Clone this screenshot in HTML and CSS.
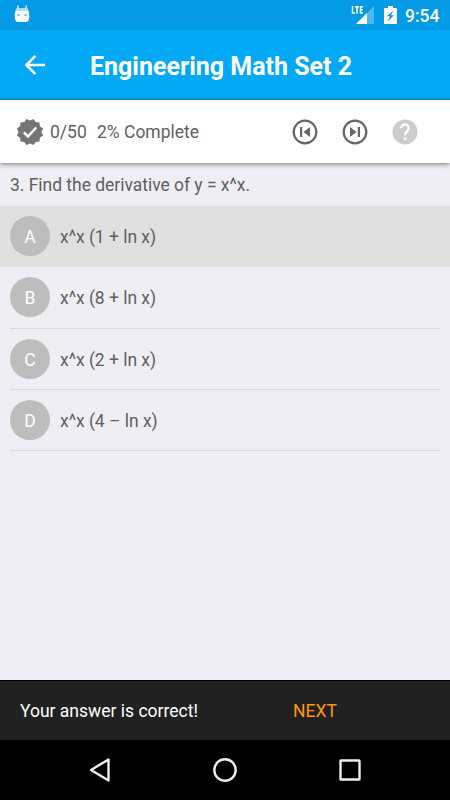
FILE: index.html
```
<!DOCTYPE html>
<html lang="en">
  <head>
    <meta charset="UTF-8" />
    <meta name="viewport" content="width=device-width, initial-scale=1.0" />
    <title>Engineering Math Set 2</title>
    <link rel="stylesheet" href="styles.css">
  </head>
  <body>
    <div class="status">
      <svg class="droid" width="16" height="18" viewBox="0 0 16 18">
        <path d="M3.500 .5l1 4M12.500 .5l-1 4" stroke="#fff" stroke-width="1.2" />
        <path d="M2.500 3.500h11Q16.500 9.500 14.700 15 14.200 17 12 17H4Q1.800 17 1.300 15-.5 9.500 2.500 3.500z" fill="#fff" />
        <path d="M2.500 3.500h11l.9 2.500H1.600z" fill="#b3dff8" />
        <path d="M3.500 9h2v2h-2zM10.500 9h2v2h-2z" fill="#58b9ee" />
      </svg>
      <svg class="signal" width="24" height="20" viewBox="0 0 24 20">
        <path d="M23 1v18H5z" fill="#fff" opacity=".3" />
        <path d="M16 8v11H5z" fill="#fff" />
        <path d="M1.500 1v7h2.500M4 1.700h4M6 1.700v7M12 1.700H9.500v6.200H12M9.500 4.700h2.300" fill="none" stroke="#fff" stroke-width="1.500" />
      </svg>
      <svg class="battery" width="13" height="18" viewBox="0 0 13 18">
        <path d="M4 0h5v2h3.200q.8 0 .8.8v14.400q0 .8-.8.8H.8q-.8 0-.8-.8V2.800Q0 2 .8 2H4z" fill="#fff" />
        <path d="M9.500 4.500L3 10.300h3L3.700 15.500 10 9.300H7z" fill="#039be5" />
      </svg>
      <span class="clock">9:54</span>
    </div>

    <header class="toolbar">
      <svg class="back" width="20" height="20" viewBox="0 0 20 20">
        <path d="M20 10H2M10.400 .9L1.300 10l9.100 9.100" fill="none" stroke="#fff" stroke-width="2.500" />
      </svg>
      <h1>Engineering Math Set 2</h1>
    </header>

    <div class="progress">
      <svg class="badge" width="28" height="28" viewBox="0 0 28 28">
        <path d="M14 2.600L17.500 .9 19.700 4.100 23.500 4.500 23.900 8.300 27.100 10.500 25.400 14 27.100 17.500 23.900 19.700 23.500 23.500 19.700 23.900 17.500 27.100 14 25.400 10.500 27.100 8.300 23.900 4.500 23.500 4.100 19.700 .9 17.500 2.600 14 .9 10.500 4.100 8.300 4.500 4.500 8.300 4.100 10.500 .9z" fill="#757575" />
        <path d="M7.800 14.300l4.200 4.100 8.300-8.900" fill="none" stroke="#fff" stroke-width="2.500" />
      </svg>
      <span class="count">0/50</span>
      <span class="percent">2% Complete</span>
      <svg class="skip" width="26" height="26" viewBox="0 0 26 26">
        <circle cx="13" cy="13" r="11.300" fill="none" stroke="#666" stroke-width="2.200" />
        <path d="M8 8h2.200v10H8zM18 8v10l-6.500-5z" fill="#666" />
      </svg>
      <svg class="skip" width="26" height="26" viewBox="0 0 26 26">
        <circle cx="13" cy="13" r="11.300" fill="none" stroke="#666" stroke-width="2.200" />
        <path d="M18 8h-2.200v10H18zM8 8v10l6.500-5z" fill="#666" />
      </svg>
      <svg class="skip" width="26" height="26" viewBox="0 0 26 26">
        <circle cx="13" cy="13" r="12.500" fill="#ccc" />
        <path d="M9.250 9.250a3.750 3.750 0 1 1 6.500 2.500c-1.600 1.600-2.750 2.200-2.750 4.500" fill="none" stroke="#fff" stroke-width="2.500" />
        <path d="M11.750 18.500h2.500v2.500h-2.500z" fill="#fff" />
      </svg>
    </div>

    <main>
      <p class="question">3. Find the derivative of y = x^x.</p>
      <ul class="answers">
        <li class="selected"><span class="letter">A</span><span class="answer">x^x (1 + ln x)</span></li>
        <li><span class="letter">B</span><span class="answer">x^x (8 + ln x)</span></li>
        <li><span class="letter">C</span><span class="answer">x^x (2 + ln x)</span></li>
        <li><span class="letter">D</span><span class="answer">x^x (4 – ln x)</span></li>
      </ul>
    </main>

    <div class="snackbar">
      <span class="message">Your answer is correct!</span>
      <span class="next">NEXT</span>
    </div>

    <nav>
      <svg width="26" height="26" viewBox="0 0 26 26">
        <path d="M21.500 2.500v21L4 13z" />
      </svg>
      <svg width="26" height="26" viewBox="0 0 26 26">
        <circle cx="13" cy="13" r="10.700" />
      </svg>
      <svg width="26" height="26" viewBox="0 0 26 26">
        <rect x="3.500" y="3.500" width="19" height="19" rx=".5" />
      </svg>
    </nav>
  </body>
</html>
```
FILE: styles.css
```
* {
  box-sizing: border-box;
}
body {
  margin: 0;
  height: 800px;
  display: flex;
  flex-direction: column;
  overflow: hidden;
  font-family: Roboto, sans-serif;
  font-size: 17.5px;
  color: #5f5f61;
  background: #efeef4;
}
svg {
  display: block;
  flex: none;
}
.status {
  height: 30px;
  display: flex;
  align-items: center;
  background: #039be5;
  color: #fff;
}
.droid {
  margin: -2px 0 0 14px;
}
.signal {
  margin-left: auto;
}
.battery {
  margin-left: 9px;
}
.clock {
  width: 35px;
  margin: 1px 10px 0 8px;
  font-size: 17.5px;
  font-weight: 500;
}
.toolbar {
  height: 70px;
  display: flex;
  align-items: center;
  background: #03a9f4;
  background: linear-gradient(#03a9f4 66px, #039eea 68px, #0281c6);
}
.back {
  margin-left: 25px;
}
h1 {
  margin: 4px 0 0 45px;
  font-size: 25px;
  line-height: 30px;
  font-weight: bold;
  color: #fff;
  white-space: nowrap;
}
.progress {
  position: relative;
  height: 63px;
  display: flex;
  align-items: center;
  background: #fff;
  box-shadow: 0 1px 5px rgba(0, 0, 0, 0.5);
  clip-path: inset(0 0 -12px);
  white-space: nowrap;
}
.badge {
  margin-left: 16px;
}
.count {
  width: 37px;
  margin: 1px 0 0 6px;
}
.percent {
  width: 195px;
  margin: 1px 0 0 10px;
}
.skip {
  margin-right: 24px;
}
main {
  flex: 1;
}
.question {
  margin: 0;
  height: 43px;
  padding: 11px 10px 0;
  line-height: 22px;
  letter-spacing: -0.03px;
}
.answers {
  margin: 0;
  padding: 0;
  list-style: none;
}
.answers li {
  height: 61.25px;
  margin: 0 10px;
  display: flex;
  align-items: center;
  gap: 10px;
  border-bottom: 1px solid #d9d9dc;
}
.answers .selected {
  margin: 0;
  padding: 0 10px;
  background: #e0e0e0;
  border-color: #e4e4e5;
}
.letter {
  width: 40px;
  height: 40px;
  padding-top: 1px;
  border-radius: 50%;
  line-height: 40px;
  text-align: center;
  color: #fff;
  background: #bdbdbd;
}
.answer {
  padding-top: 2px;
  letter-spacing: -0.03px;
}
.snackbar {
  height: 60px;
  display: flex;
  align-items: center;
  padding: 0 20px;
  border-top: 1px solid #000;
  background: #212121;
  color: #fff;
}
.message {
  width: 273px;
}
.next {
  color: #ff9800;
}
nav {
  height: 60px;
  display: flex;
  align-items: center;
  justify-content: center;
  gap: 99px;
  background: #000;
}
nav svg {
  fill: none;
  stroke: #eee;
  stroke-width: 2.400;
  stroke-linejoin: round;
}
```
